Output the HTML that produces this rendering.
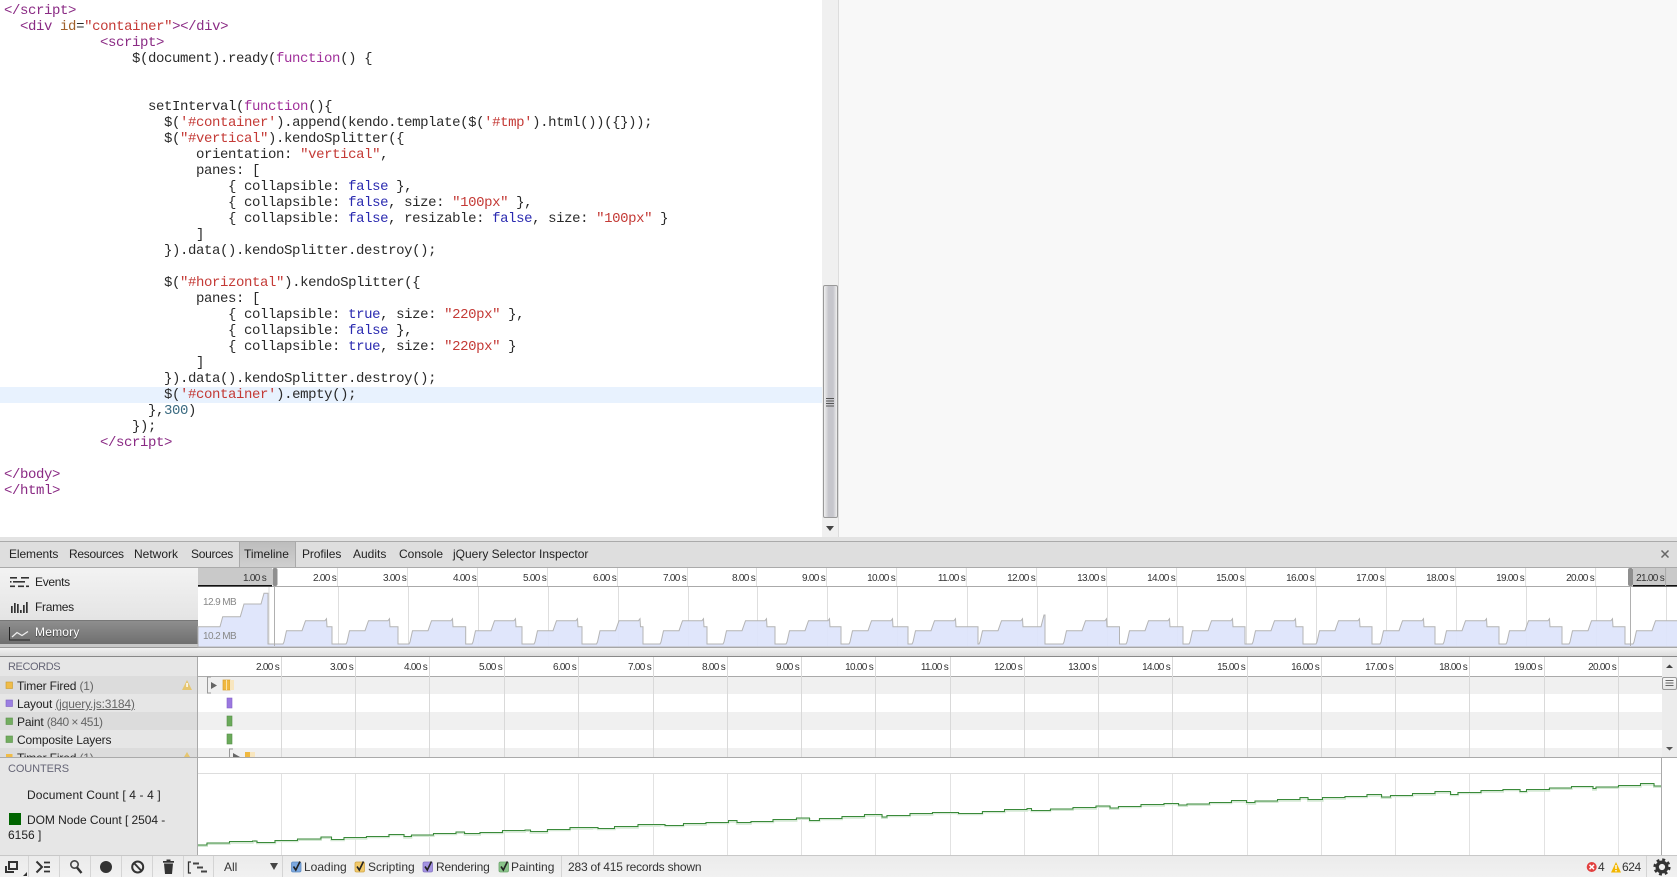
<!DOCTYPE html>
<html><head><meta charset="utf-8"><title>Timeline</title>
<style>
html,body{margin:0;padding:0;width:1677px;height:877px;overflow:hidden;background:#fff}
body{position:relative;font-family:"Liberation Sans",sans-serif;font-size:12px;color:#222}
div,pre,svg,b,span.t{box-sizing:border-box}
.a{position:absolute}
.t{position:absolute;line-height:16px;white-space:nowrap}
pre{position:absolute;left:4px;top:3px;margin:0;font:14px/16px "Liberation Mono",monospace;letter-spacing:-.4px;color:#2a2a2a}
.g{color:#8a2a84}.r{color:#c43a36}.n{color:#a0602a}.k{color:#a0309a}.b{color:#2a2ab0}.nm{color:#3a6a80}
.tk{position:absolute;height:18px;line-height:22px;transform:translateX(-100%);padding-right:1px;font-size:10px;letter-spacing:-.7px;color:#333;white-space:nowrap;font-weight:400}
.o{top:568px}.o.l{border-right:1px solid #ddd}.rr{top:657px;padding-right:2px}
.m{color:#666}
</style></head><body>
<!-- code pane -->
<div class="a" style="left:839px;top:0;width:838px;height:537px;background:#f8f8f8"></div>
<div class="a" style="left:838px;top:0;width:1px;height:537px;background:#ddd"></div>
<div class="a" style="left:822px;top:0;width:16px;height:537px;background:#f0f0f0"></div>
<div class="a" style="left:0;top:387px;width:822px;height:16px;background:#e8f2fe"></div>
<div class="a" style="left:823px;top:285px;width:15px;height:233px;border:1px solid #999;border-radius:2px;background:linear-gradient(90deg,#f0f0f0,#c6c6cc 35%,#c6c6cc 70%,#eee)"></div>
<pre><span class="g">&lt;/script&gt;</span>
  <span class="g">&lt;div</span> <span class="n">id</span>=<span class="r">"container"</span><span class="g">&gt;&lt;/div&gt;</span>
            <span class="g">&lt;script&gt;</span>
                $(document).ready(<span class="k">function</span>() {


                  setInterval(<span class="k">function</span>(){
                    $(<span class="r">'#container'</span>).append(kendo.template($(<span class="r">'#tmp'</span>).html())({}));
                    $(<span class="r">"#vertical"</span>).kendoSplitter({
                        orientation: <span class="r">"vertical"</span>,
                        panes: [
                            { collapsible: <span class="b">false</span> },
                            { collapsible: <span class="b">false</span>, size: <span class="r">"100px"</span> },
                            { collapsible: <span class="b">false</span>, resizable: <span class="b">false</span>, size: <span class="r">"100px"</span> }
                        ]
                    }).data().kendoSplitter.destroy();

                    $(<span class="r">"#horizontal"</span>).kendoSplitter({
                        panes: [
                            { collapsible: <span class="b">true</span>, size: <span class="r">"220px"</span> },
                            { collapsible: <span class="b">false</span> },
                            { collapsible: <span class="b">true</span>, size: <span class="r">"220px"</span> }
                        ]
                    }).data().kendoSplitter.destroy();
                    $(<span class="r">'#container'</span>).empty();
                  },<span class="nm">300</span>)
                });
            <span class="g">&lt;/script&gt;</span>

<span class="g">&lt;/body&gt;</span>
<span class="g">&lt;/html&gt;</span></pre>

<!-- devtools backgrounds -->
<div class="a" style="left:0;top:537px;width:1677px;height:4px;background:#e3e3e3"></div>
<div class="a" style="left:0;top:541px;width:1677px;height:27px;background:#dedede;border-top:1px solid #aaa;border-bottom:1px solid #aaa"></div>
<div class="a" style="left:239px;top:542px;width:57px;height:25px;background:linear-gradient(#bdbdbd,#cfcfcf);border-left:1px solid #aaa;border-right:1px solid #aaa"></div>
<div class="a" style="left:0;top:568px;width:198px;height:79px;background:linear-gradient(#f3f3f3,#dcdcdc)"></div>
<div class="a" style="left:0;top:620px;width:198px;height:24px;background:linear-gradient(#8e8e8e,#6f6f6f);border-top:1px solid #777"></div>
<div class="a" style="left:0;top:644px;width:198px;height:3px;background:#c8c8c8"></div>
<div class="a" style="left:198px;top:586px;width:1479px;height:1px;background:#aaa"></div>
<div class="a" style="left:0;top:647px;width:1677px;height:9px;background:linear-gradient(#f2f2f2,#dcdcdc);border-top:1px solid #999"></div>
<div class="a" style="left:0;top:656px;width:1677px;height:1px;background:#888"></div>
<!-- records -->
<div class="a" style="left:0;top:657px;width:197px;height:19px;background:#e6e6e6"></div>
<div class="a" style="left:0;top:676px;width:197px;height:18px;background:#dcdcdc"></div>
<div class="a" style="left:0;top:694px;width:197px;height:18px;background:#e6e6e6"></div>
<div class="a" style="left:0;top:712px;width:197px;height:18px;background:#dcdcdc"></div>
<div class="a" style="left:0;top:730px;width:197px;height:18px;background:#e6e6e6"></div>
<div class="a" style="left:0;top:748px;width:197px;height:9px;background:#dcdcdc"></div>
<div class="a" style="left:197px;top:676px;width:1465px;height:1px;background:#aaa"></div>
<div class="a" style="left:198px;top:677px;width:1464px;height:17px;background:#f0f0f0"></div>
<div class="a" style="left:198px;top:712px;width:1464px;height:18px;background:#f0f0f0"></div>
<div class="a" style="left:198px;top:748px;width:1464px;height:9px;background:#f0f0f0"></div>
<div class="a" style="left:197px;top:657px;width:1px;height:198px;background:#aaa"></div>
<div class="a" style="left:1662px;top:657px;width:15px;height:100px;background:#ececec"></div>
<div class="a" style="left:1662px;top:677px;width:15px;height:13px;background:linear-gradient(#f8f8f8,#e4e4e4);border:1px solid #999;border-radius:2px"></div>
<div class="a" style="left:0;top:757px;width:1677px;height:1px;background:#aaa"></div>
<!-- counters -->
<div class="a" style="left:0;top:758px;width:197px;height:97px;background:#e6e6e6"></div>
<div class="a" style="left:198px;top:773px;width:1464px;height:1px;background:#ddd"></div>
<div class="a" style="left:1661px;top:758px;width:1px;height:97px;background:#aaa"></div>
<div class="a" style="left:9px;top:813px;width:12px;height:12px;background:#006400"></div>
<!-- toolbar -->
<div class="a" style="left:0;top:855px;width:1677px;height:22px;background:linear-gradient(#ebebeb,#f1f1f1);border-top:1px solid #c8c8c8"></div>

<svg class="a" style="left:0;top:0" width="1677" height="877" viewBox="0 0 1677 877">
<!-- overview selection -->
<rect x="198" y="568" width="74" height="17" fill="#c9c9c9"/><rect x="198" y="585" width="74" height="1.5" fill="#111"/>
<rect x="1633" y="568" width="44" height="17" fill="#c9c9c9"/><rect x="1633" y="585" width="44" height="1.5" fill="#111"/>
<!-- overview grid -->
<path d="M269 587V646M338.5 587V646M408.5 587V646M478.5 587V646M548.5 587V646M618.5 587V646M688.5 587V646M757.5 587V646M827.5 587V646M897.5 587V646M967.5 587V646M1037.5 587V646M1107.5 587V646M1177.5 587V646M1246.5 587V646M1316.5 587V646M1386.5 587V646M1456.5 587V646M1526.5 587V646M1596.5 587V646M1666.5 587V646" stroke="#dedede" fill="none"/>
<!-- memory -->
<path fill="#dde4fb" fill-opacity=".92" stroke="#b4b4b4" d="M198 647V626.7H220L222.7 616.7H240.3L244 604H261L264 593.3H268V644
H283l1-2 2.5-11.3h15.5l3.5-10h19.5l1.5-2 .5 8H332V644
H346l1-2 2.5-11.3h15.5l3.5-10h19.5l1.5-2 .5 8H398V644
H409l1-2 2.5-11.3h15.5l3.5-10h19.5l1.5-2 .5 8H465.7V644
H472l1-2 2.5-11.3h15.5l3.5-10h19.5l1.5-2 .5 8H522V644
H534l1-2 2.5-11.3h15.5l3.5-10h19.5l1.5-2 .5 8H582V644
H596.5l1-2 2.5-11.3h15.5l3.5-10h19.5l1.5-2 .5 8H643V644
H660l1-2 2.5-11.3h15.5l3.5-10h19.5l1.5-2 .5 8H707V644
H723l1-2 2.5-11.3h15.5l3.5-10h19.5l1.5-2 .5 8H775V644
H786l1-2 2.5-11.3h15.5l3.5-10h19.5l1.5-2 .5 8H841V644
H849l1-2 2.5-11.3h15.5l3.5-10h19.5l1.5-2 .5 8H908V644
H912l1-2 2.5-11.3h15.5l3.5-10h19.5l1.5-2 .5 8H978V644
H979l1-2 2.5-11.3h15.5l3.5-10h19.5l1.5-2 .5 8H1041L1044 615H1045V644
H1063l1-2 2.5-11.3h15.5l3.5-10h19.5l1.5-2 .5 8H1119.5V644
H1126l1-2 2.5-11.3h15.5l3.5-10h19.5l1.5-2 .5 8H1183V644
H1189l1-2 2.5-11.3h15.5l3.5-10h19.5l1.5-2 .5 8H1245V644
H1252l1-2 2.5-11.3h15.5l3.5-10h19.5l1.5-2 .5 8H1303V644
H1316l1-2 2.5-11.3h15.5l3.5-10h19.5l1.5-2 .5 8H1372V644
H1380l1-2 2.5-11.3h15.5l3.5-10h19.5l1.5-2 .5 8H1435V644
H1443l1-2 2.5-11.3h15.5l3.5-10h19.5l1.5-2 .5 8H1499V644
H1506l1-2 2.5-11.3h15.5l3.5-10h19.5l1.5-2 .5 8H1562V644
H1569l1-2 2.5-11.3h15.5l3.5-10h19.5l1.5-2 .5 8H1625V644
H1633l1-2 2.5-11.3h15.5l3.5-10H1680V647H198Z"/>
<path d="M274.5 586V646M1630.5 586V646" stroke="#b0b0b0"/>
<rect x="272.5" y="568" width="5" height="18" rx="2" fill="#8f8f8f"/><rect x="1628" y="568" width="5" height="18" rx="2" fill="#8f8f8f"/>
<!-- records grid -->
<path d="M281.5 657V757M355.5 657V757M429.5 657V757M504.5 657V757M578.5 657V757M653.5 657V757M727.5 657V757M801.5 657V757M875.5 657V757M950.5 657V757M1024.5 657V757M1098.5 657V757M1172.5 657V757M1247.5 657V757M1321.5 657V757M1395.5 657V757M1469.5 657V757M1544.5 657V757M1618.5 657V757" stroke="#d9d9d9" fill="none"/>
<!-- counters grid -->
<path d="M281.5 774V855M355.5 774V855M429.5 774V855M504.5 774V855M578.5 774V855M653.5 774V855M727.5 774V855M801.5 774V855M875.5 774V855M950.5 774V855M1024.5 774V855M1098.5 774V855M1172.5 774V855M1247.5 774V855M1321.5 774V855M1395.5 774V855M1469.5 774V855M1544.5 774V855M1618.5 774V855" stroke="#e2e2e2" fill="none"/>
<!-- counter line -->
<g fill="none">
<path stroke="#d4e8d4" stroke-width="2" transform="translate(0 1)" d="M198 845H207V843H229.6V841.7H252.7V841L255 840L257 841V842.3H275.2V840.3H297.6V839H320.8V837H331.3V839.3H343.9V837.7H366.4V836.3H388.8V834.3H404.2V836.7H411.3V835H433.7V833.3H456.2V832H464.6V833.7H480V832.3H502.5V830.7H524.9V830H530.5V831.7H547.3V829.3H569.8V827.7H592.2V827.3H597.9V828.3H614.7V826.7H637.8V824.7H659.6V824.3H665.2V825.3H683.4V823.7H705.9V822.3H728.3V820.7H736.8V822.7H750.8V821.3H773.2V819.7H796.4V818H809.7V820.3H819.5V818.3H842V816.7H864.4V814.7H882V817H886.9V815.3H910V813.7H932.5V812.3H958.5V813.3H982.3V811.3H1004.7V809.7H1027.2V808.7H1031.4V810.3H1050.3V809H1072.8V807.7H1095.9V806H1110V808H1118.4V806.3H1140.8V804.7H1164V803.3H1178.7V805H1187.1V804H1209.6V802.3H1231.3V800.7H1246.7V802.7H1255.2V801H1277.6V799.7H1300V797.7H1308V799.7H1322.7V797.7H1345V796.3H1367V794.7H1381.7V797H1390.7V795.3H1412.7V793.7H1435V791.7H1450.7V794.3H1458V792.3H1481V790.7H1503V789.3H1520V791.3H1526.7V789.7H1549.3V788H1571.7V786.3H1593V788.7H1596V787H1618.3V785.7H1640.7V783.7H1654V786H1661"/>
<path stroke="#3a8a3a" stroke-width="1" shape-rendering="crispEdges" d="M198 845H207V843H229.6V841.7H252.7V841H257V842.3H275.2V840.3H297.6V839H320.8V837H331.3V839.3H343.9V837.7H366.4V836.3H388.8V834.3H404.2V836.7H411.3V835H433.7V833.3H456.2V832H464.6V833.7H480V832.3H502.5V830.7H524.9V830H530.5V831.7H547.3V829.3H569.8V827.7H592.2V827.3H597.9V828.3H614.7V826.7H637.8V824.7H659.6V824.3H665.2V825.3H683.4V823.7H705.9V822.3H728.3V820.7H736.8V822.7H750.8V821.3H773.2V819.7H796.4V818H809.7V820.3H819.5V818.3H842V816.7H864.4V814.7H882V817H886.9V815.3H910V813.7H932.5V812.3H958.5V813.3H982.3V811.3H1004.7V809.7H1027.2V808.7H1031.4V810.3H1050.3V809H1072.8V807.7H1095.9V806H1110V808H1118.4V806.3H1140.8V804.7H1164V803.3H1178.7V805H1187.1V804H1209.6V802.3H1231.3V800.7H1246.7V802.7H1255.2V801H1277.6V799.7H1300V797.7H1308V799.7H1322.7V797.7H1345V796.3H1367V794.7H1381.7V797H1390.7V795.3H1412.7V793.7H1435V791.7H1450.7V794.3H1458V792.3H1481V790.7H1503V789.3H1520V791.3H1526.7V789.7H1549.3V788H1571.7V786.3H1593V788.7H1596V787H1618.3V785.7H1640.7V783.7H1654V786H1661"/>
</g>
<!-- code scrollbar grip + arrow -->
<path d="M826 398.5H834M826 401H834M826 403.5H834M826 406H834" stroke="#555"/>
<path d="M826 526H834L830 531Z" fill="#444"/>
<!-- close x -->
<path d="M1661.5 550.5L1668.5 557.5M1668.5 550.5L1661.5 557.5" stroke="#666" stroke-width="1.5"/>
<!-- sidebar icons -->
<g fill="#333">
<rect x="10" y="577" width="7" height="1.6"/><rect x="21" y="577" width="8" height="1.6"/>
<rect x="13" y="581" width="12" height="1.6"/><rect x="10" y="581" width="1.5" height="1.6"/>
<rect x="10" y="585.5" width="5" height="1.6"/><rect x="18" y="585.5" width="6" height="1.6"/><rect x="26" y="585.5" width="3" height="1.6"/>
<rect x="11" y="606" width="1.7" height="7"/><rect x="14" y="603" width="1.7" height="10"/><rect x="17" y="604" width="1.7" height="9"/><rect x="20" y="610" width="1.7" height="3"/><rect x="23" y="605" width="1.7" height="8"/><rect x="26" y="602" width="1.7" height="11"/>
</g>
<path d="M9.5 627V640H30" fill="none" stroke="#222"/>
<path d="M12 637L17 632.5L22 635.5L28 631.5" fill="none" stroke="#eee" stroke-width="1.3"/>
<!-- record squares -->
<rect x="6" y="682" width="6.5" height="6.5" fill="#f0bc48" stroke="#c79a30" stroke-width=".6"/>
<rect x="6" y="700" width="6.5" height="6.5" fill="#9c7fe2" stroke="#7d60c0" stroke-width=".6"/>
<rect x="6" y="718" width="6.5" height="6.5" fill="#72ad5f" stroke="#5a8f49" stroke-width=".6"/>
<rect x="6" y="736" width="6.5" height="6.5" fill="#72ad5f" stroke="#5a8f49" stroke-width=".6"/>
<rect x="6" y="754" width="6.5" height="3" fill="#f0bc48"/>
<!-- warning tris -->
<path d="M182 690L187 680L192 690Z" fill="#e6c670"/><rect x="186.3" y="683" width="1.5" height="4" fill="#fff"/>
<path d="M184 757L187 752L190 757Z" fill="#e6c670"/>
<!-- timer row -->
<path d="M211 677H207.5V693H211" fill="none" stroke="#999"/>
<path d="M211 682L217 685.5L211 689Z" fill="#666"/>
<rect x="223" y="680" width="7" height="10" fill="#f0b840" stroke="#d8a030" stroke-width=".7"/><rect x="226" y="680" width="1" height="10" fill="#fbe3a8"/><rect x="230" y="680" width="4" height="10" fill="#f8e6bf"/>
<rect x="227" y="698" width="5" height="10" fill="#9b78e0" stroke="#8462c8" stroke-width=".6"/>
<rect x="227" y="716" width="5" height="10" fill="#6aaa5a" stroke="#588f49" stroke-width=".6"/>
<rect x="227" y="734" width="5" height="10" fill="#6aaa5a" stroke="#588f49" stroke-width=".6"/>
<path d="M233 749H229.5V757" fill="none" stroke="#999"/>
<path d="M233 753L240 757H233Z" fill="#666"/>
<rect x="245" y="752" width="5" height="5" fill="#f0b840"/><rect x="250" y="752" width="5" height="5" fill="#f8e6bf"/>
<!-- record scrollbar -->
<path d="M1666 668L1669.5 664.5L1673 668Z" fill="#444"/>
<path d="M1666 747H1673L1669.5 750.5Z" fill="#555"/>
<path d="M1665.5 680.5H1673.5M1665.5 683H1673.5M1665.5 685.5H1673.5" stroke="#666"/>
<!-- toolbar separators -->
<path d="M28.5 856V877M59.5 856V877M90.5 856V877M121.5 856V877M152.5 856V877M183.5 856V877M213.5 856V877M282.5 856V877M561.5 856V877M1646.5 856V877" stroke="#d4d4d4"/>
<!-- dock icon -->
<g fill="none" stroke="#333" stroke-width="2">
<rect x="9" y="862" width="8" height="7"/><path d="M6 866V872H14"/>
</g>
<path d="M27 872V876H23Z" fill="#333"/>
<!-- console -->
<path d="M36.5 861.5L42 867L36.5 872.5" fill="none" stroke="#333" stroke-width="2"/>
<path d="M44 862.5H50M44 867H50M44 871.5H50" stroke="#333" stroke-width="1.8"/>
<!-- search -->
<circle cx="74.5" cy="864.5" r="3.7" fill="none" stroke="#444" stroke-width="1.6"/>
<path d="M77 867.5L81.5 873" stroke="#333" stroke-width="2.4"/>
<!-- record -->
<circle cx="106" cy="867" r="6" fill="#333"/>
<!-- clear -->
<circle cx="137.7" cy="867" r="5.5" fill="none" stroke="#333" stroke-width="2"/>
<path d="M134 863L141.5 871" stroke="#333" stroke-width="2"/>
<!-- trash -->
<path d="M164 863.5H173L172 874H165Z" fill="#333"/><rect x="163" y="861" width="11" height="1.7" fill="#333"/><rect x="166.5" y="859.5" width="4" height="1.7" fill="#333"/>
<!-- bars -->
<path d="M191 862H188.5V873H191" fill="none" stroke="#333" stroke-width="1.3"/>
<path d="M193 863.5H199M197 867.5H203M201 871.5H207" stroke="#444" stroke-width="2"/>
<!-- All arrow -->
<path d="M270 863H278L274 870Z" fill="#444"/>
<!-- checkboxes -->
<g stroke-width=".8">
<rect x="291.5" y="862" width="9.5" height="10" rx="1.5" fill="#7ba8e0" stroke="#5f8ac0"/>
<rect x="355" y="862" width="9.5" height="10" rx="1.5" fill="#f2c96a" stroke="#cfa648"/>
<rect x="423" y="862" width="9.5" height="10" rx="1.5" fill="#a493e2" stroke="#8474c4"/>
<rect x="499" y="862" width="9.5" height="10" rx="1.5" fill="#8ac48a" stroke="#6ca56c"/>
</g>
<g fill="none" stroke="#222" stroke-width="1.6">
<path d="M293.5 866.5L295.8 870L300 861.5"/><path d="M357 866.5L359.3 870L363.5 861.5"/><path d="M425 866.5L427.3 870L431.5 861.5"/><path d="M501 866.5L503.3 870L507.5 861.5"/>
</g>
<!-- error -->
<circle cx="1591.7" cy="867" r="5" fill="#e2403f"/>
<path d="M1589.5 864.8L1594 869.2M1594 864.8L1589.5 869.2" stroke="#fff" stroke-width="1.5"/>
<!-- warning -->
<path d="M1611 872.5L1616 862L1621 872.5Z" fill="#f2b600"/><rect x="1615.3" y="865" width="1.4" height="4" fill="#fff"/><rect x="1615.3" y="870" width="1.4" height="1.4" fill="#fff"/>
<!-- gear -->
<circle cx="1662" cy="867" r="4.8" fill="none" stroke="#333" stroke-width="3.4"/>
<circle cx="1662" cy="867" r="7.3" fill="none" stroke="#333" stroke-width="2.6" stroke-dasharray="2.9 2.83"/>
</svg>

<!-- tabs -->
<span class="t" style="left:9px;top:546px;letter-spacing:-.1px">Elements</span>
<span class="t" style="left:69px;top:546px;letter-spacing:-.3px">Resources</span>
<span class="t" style="left:134px;top:546px">Network</span>
<span class="t" style="left:191px;top:546px;letter-spacing:-.3px">Sources</span>
<span class="t" style="left:244px;top:546px">Timeline</span>
<span class="t" style="left:302px;top:546px;letter-spacing:-.1px">Profiles</span>
<span class="t" style="left:353px;top:546px">Audits</span>
<span class="t" style="left:399px;top:546px">Console</span>
<span class="t" style="left:453px;top:546px">jQuery Selector Inspector</span>

<!-- overview side -->
<span class="t" style="left:35px;top:574px;letter-spacing:-.3px">Events</span>
<span class="t" style="left:35px;top:599px;letter-spacing:-.3px">Frames</span>
<span class="t" style="left:35px;top:624px;letter-spacing:.2px;color:#fff;text-shadow:0 1px 1px #333">Memory</span>

<!-- overview ruler -->
<b class="tk o" style="left:267px">1.00 s</b>
<b class="tk o l" style="left:338px">2.00 s</b>
<b class="tk o l" style="left:408px">3.00 s</b>
<b class="tk o l" style="left:478px">4.00 s</b>
<b class="tk o l" style="left:548px">5.00 s</b>
<b class="tk o l" style="left:618px">6.00 s</b>
<b class="tk o l" style="left:688px">7.00 s</b>
<b class="tk o l" style="left:757px">8.00 s</b>
<b class="tk o l" style="left:827px">9.00 s</b>
<b class="tk o l" style="left:897px">10.00 s</b>
<b class="tk o l" style="left:967px">11.00 s</b>
<b class="tk o l" style="left:1037px">12.00 s</b>
<b class="tk o l" style="left:1107px">13.00 s</b>
<b class="tk o l" style="left:1177px">14.00 s</b>
<b class="tk o l" style="left:1246px">15.00 s</b>
<b class="tk o l" style="left:1316px">16.00 s</b>
<b class="tk o l" style="left:1386px">17.00 s</b>
<b class="tk o l" style="left:1456px">18.00 s</b>
<b class="tk o l" style="left:1526px">19.00 s</b>
<b class="tk o l" style="left:1596px">20.00 s</b>
<b class="tk o" style="left:1666px;border-right:1px solid #aaa">21.00 s</b>
<span class="t" style="left:203px;top:595px;font-size:10px;letter-spacing:-.6px;color:#888">12.9 MB</span>
<span class="t" style="left:203px;top:629px;font-size:10px;letter-spacing:-.6px;color:#888">10.2 MB</span>

<!-- records ruler -->
<b class="tk rr" style="left:281px">2.00 s</b>
<b class="tk rr" style="left:355px">3.00 s</b>
<b class="tk rr" style="left:429px">4.00 s</b>
<b class="tk rr" style="left:504px">5.00 s</b>
<b class="tk rr" style="left:578px">6.00 s</b>
<b class="tk rr" style="left:653px">7.00 s</b>
<b class="tk rr" style="left:727px">8.00 s</b>
<b class="tk rr" style="left:801px">9.00 s</b>
<b class="tk rr" style="left:875px">10.00 s</b>
<b class="tk rr" style="left:950px">11.00 s</b>
<b class="tk rr" style="left:1024px">12.00 s</b>
<b class="tk rr" style="left:1098px">13.00 s</b>
<b class="tk rr" style="left:1172px">14.00 s</b>
<b class="tk rr" style="left:1247px">15.00 s</b>
<b class="tk rr" style="left:1321px">16.00 s</b>
<b class="tk rr" style="left:1395px">17.00 s</b>
<b class="tk rr" style="left:1469px">18.00 s</b>
<b class="tk rr" style="left:1544px">19.00 s</b>
<b class="tk rr" style="left:1618px">20.00 s</b>

<!-- records side -->
<span class="t" style="left:8px;top:659px;font-size:11px;letter-spacing:-.4px;color:#667">RECORDS</span>
<div class="a" style="left:0;top:676px;width:197px;height:81px;overflow:hidden">
<span class="t" style="left:17px;top:2px;letter-spacing:-.15px">Timer Fired <span class="m">(1)</span></span>
<span class="t" style="left:17px;top:20px;letter-spacing:-.15px">Layout <span class="m" style="text-decoration:underline">(jquery.js:3184)</span></span>
<span class="t" style="left:17px;top:38px;letter-spacing:-.15px">Paint <span class="m" style="letter-spacing:-.55px">(840 × 451)</span></span>
<span class="t" style="left:17px;top:56px;letter-spacing:-.15px">Composite Layers</span>
<span class="t" style="left:17px;top:74px;letter-spacing:-.15px">Timer Fired <span class="m">(1)</span></span>
</div>

<!-- counters side -->
<span class="t" style="left:8px;top:761px;font-size:11px;letter-spacing:-.1px;color:#667">COUNTERS</span>
<span class="t" style="left:27px;top:787px;letter-spacing:.13px">Document Count [ 4 - 4 ]</span>
<span class="t" style="left:27px;top:812px;letter-spacing:-.05px">DOM Node Count [ 2504 -</span>
<span class="t" style="left:8px;top:827px">6156 ]</span>

<!-- toolbar text -->
<span class="t" style="left:224px;top:859px;color:#333">All</span>
<span class="t" style="left:304px;top:859px;color:#333">Loading</span>
<span class="t" style="left:368px;top:859px;color:#333">Scripting</span>
<span class="t" style="left:436px;top:859px;color:#333;letter-spacing:-.2px">Rendering</span>
<span class="t" style="left:511px;top:859px;color:#333">Painting</span>
<span class="t" style="left:568px;top:859px;color:#333;letter-spacing:-.2px">283 of 415 records shown</span>
<span class="t" style="left:1598px;top:859px;color:#333">4</span>
<span class="t" style="left:1622px;top:859px;color:#333;letter-spacing:-.4px">624</span>
</body></html>
